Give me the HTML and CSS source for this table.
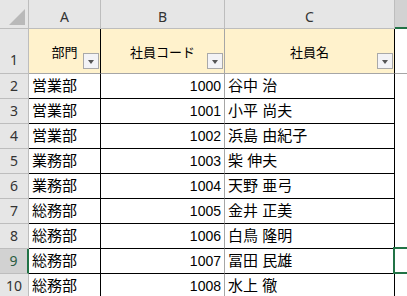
FILE: index.html
```html
<!DOCTYPE html>
<html lang="ja">
<head>
    <meta charset="UTF-8">
    <title>社員一覧</title>
    <link rel="stylesheet" href="styles.css">
</head>
<body>
    <div class="sheet">
        <!-- 列見出し -->
        <div class="corner"><span class="corner-mark"></span></div>
        <div class="col-head">A</div>
        <div class="col-head">B</div>
        <div class="col-head">C</div>
        <div class="col-head active"></div>

        <!-- 1行目: フィルター付き見出し -->
        <div class="row-head top">1</div>
        <div class="title edge">部門<span class="filter"></span></div>
        <div class="title">社員コード<span class="filter"></span></div>
        <div class="title edge">社員名<span class="filter"></span></div>
        <div class="blank title-gap"></div>

        <div class="row-head">2</div>
        <div class="cell edge">営業部</div>
        <div class="cell num">1000</div>
        <div class="cell edge">谷中 治</div>
        <div class="blank"></div>

        <div class="row-head">3</div>
        <div class="cell edge">営業部</div>
        <div class="cell num">1001</div>
        <div class="cell edge">小平 尚夫</div>
        <div class="blank"></div>

        <div class="row-head">4</div>
        <div class="cell edge">営業部</div>
        <div class="cell num">1002</div>
        <div class="cell edge">浜島 由紀子</div>
        <div class="blank"></div>

        <div class="row-head">5</div>
        <div class="cell edge">業務部</div>
        <div class="cell num">1003</div>
        <div class="cell edge">柴 伸夫</div>
        <div class="blank"></div>

        <div class="row-head">6</div>
        <div class="cell edge">業務部</div>
        <div class="cell num">1004</div>
        <div class="cell edge">天野 亜弓</div>
        <div class="blank"></div>

        <div class="row-head">7</div>
        <div class="cell edge">総務部</div>
        <div class="cell num">1005</div>
        <div class="cell edge">金井 正美</div>
        <div class="blank"></div>

        <div class="row-head">8</div>
        <div class="cell edge">総務部</div>
        <div class="cell num">1006</div>
        <div class="cell edge">白鳥 隆明</div>
        <div class="blank"></div>

        <div class="row-head active">9</div>
        <div class="cell edge">総務部</div>
        <div class="cell num">1007</div>
        <div class="cell edge">冨田 民雄</div>
        <div class="blank selected"></div>

        <div class="row-head">10</div>
        <div class="cell edge">総務部</div>
        <div class="cell num">1008</div>
        <div class="cell edge">水上 徹</div>
        <div class="blank"></div>
    </div>
</body>
</html>
```

FILE: styles.css
```css
/* 表全体 */
body {
    margin: 0;
    background: #fff;
    font-family: "Liberation Sans", "Noto Sans CJK JP", sans-serif;
    color: #000;
    overflow: hidden;
}

.sheet {
    display: grid;
    grid-template-columns: 29px 72px 124px 170px 1fr;
    grid-template-rows: 29px 45px repeat(9, 25px);
    width: 407px;
}

.sheet > div {
    box-sizing: border-box;
    position: relative;
}

/* 左上の角 */
.corner {
    background: #e6e6e6;
    border-right: 1px solid #bdbdbd;
    border-bottom: 1px solid #bdbdbd;
}

.corner-mark {
    position: absolute;
    right: 3px;
    bottom: 3px;
    width: 0;
    height: 0;
    border-left: 16px solid transparent;
    border-bottom: 16px solid #b9b9b9;
}

/* 列見出し */
.col-head {
    background: #e6e6e6;
    border-right: 1px solid #bdbdbd;
    border-bottom: 1px solid #bdbdbd;
    display: flex;
    justify-content: center;
    align-items: center;
    padding-top: 4px;
    font-family: "Noto Sans", sans-serif;
    font-size: 14px;
    color: #333;
}

.col-head.active {
    background: #d2d2d2;
    border-bottom: 2px solid #217346;
    border-right: none;
}

/* 行見出し */
.row-head {
    background: #e6e6e6;
    border-right: 1px solid #bdbdbd;
    border-bottom: 1px solid #bdbdbd;
    display: flex;
    justify-content: center;
    align-items: flex-end;
    padding-bottom: 5px;
    font-family: "Noto Sans", sans-serif;
    font-size: 14px;
    line-height: 1;
    color: #333;
}

.row-head.top {
    padding-bottom: 6px;
}

.row-head.active {
    background: #d2d2d2;
    border-right: 2px solid #217346;
    color: #2b5c41;
}

/* 1行目の見出しセル */
.title {
    background: #fff2cc;
    border-right: 1px solid #a6a6a6;
    border-bottom: 1px solid #a6a6a6;
    display: flex;
    justify-content: center;
    align-items: center;
    font-size: 13px;
}

.title.edge {
    border-right-color: #000;
}

.filter {
    position: absolute;
    right: 1px;
    bottom: 4px;
    width: 16px;
    height: 16px;
    box-sizing: border-box;
    border: 1px solid #a9a9a9;
    background: #f3f3f6;
}

.filter::after {
    content: "";
    position: absolute;
    left: 4px;
    top: 6px;
    border-left: 3.5px solid transparent;
    border-right: 3.5px solid transparent;
    border-top: 4px solid #555;
}

/* データセル */
.cell {
    border-right: 1px solid #a6a6a6;
    border-bottom: 1px solid #000;
    padding: 0 3px;
    font-size: 15px;
    line-height: 24px;
    white-space: nowrap;
}

.cell.edge {
    border-right-color: #000;
}

.cell.num {
    text-align: right;
    font-size: 14px;
}

/* D列 */
.title-gap {
    border-bottom: 1px solid #a6a6a6;
}

.selected::after {
    content: "";
    position: absolute;
    left: -2px;
    top: -2px;
    right: -4px;
    bottom: 0;
    border: 2px solid #217346;
}
```
